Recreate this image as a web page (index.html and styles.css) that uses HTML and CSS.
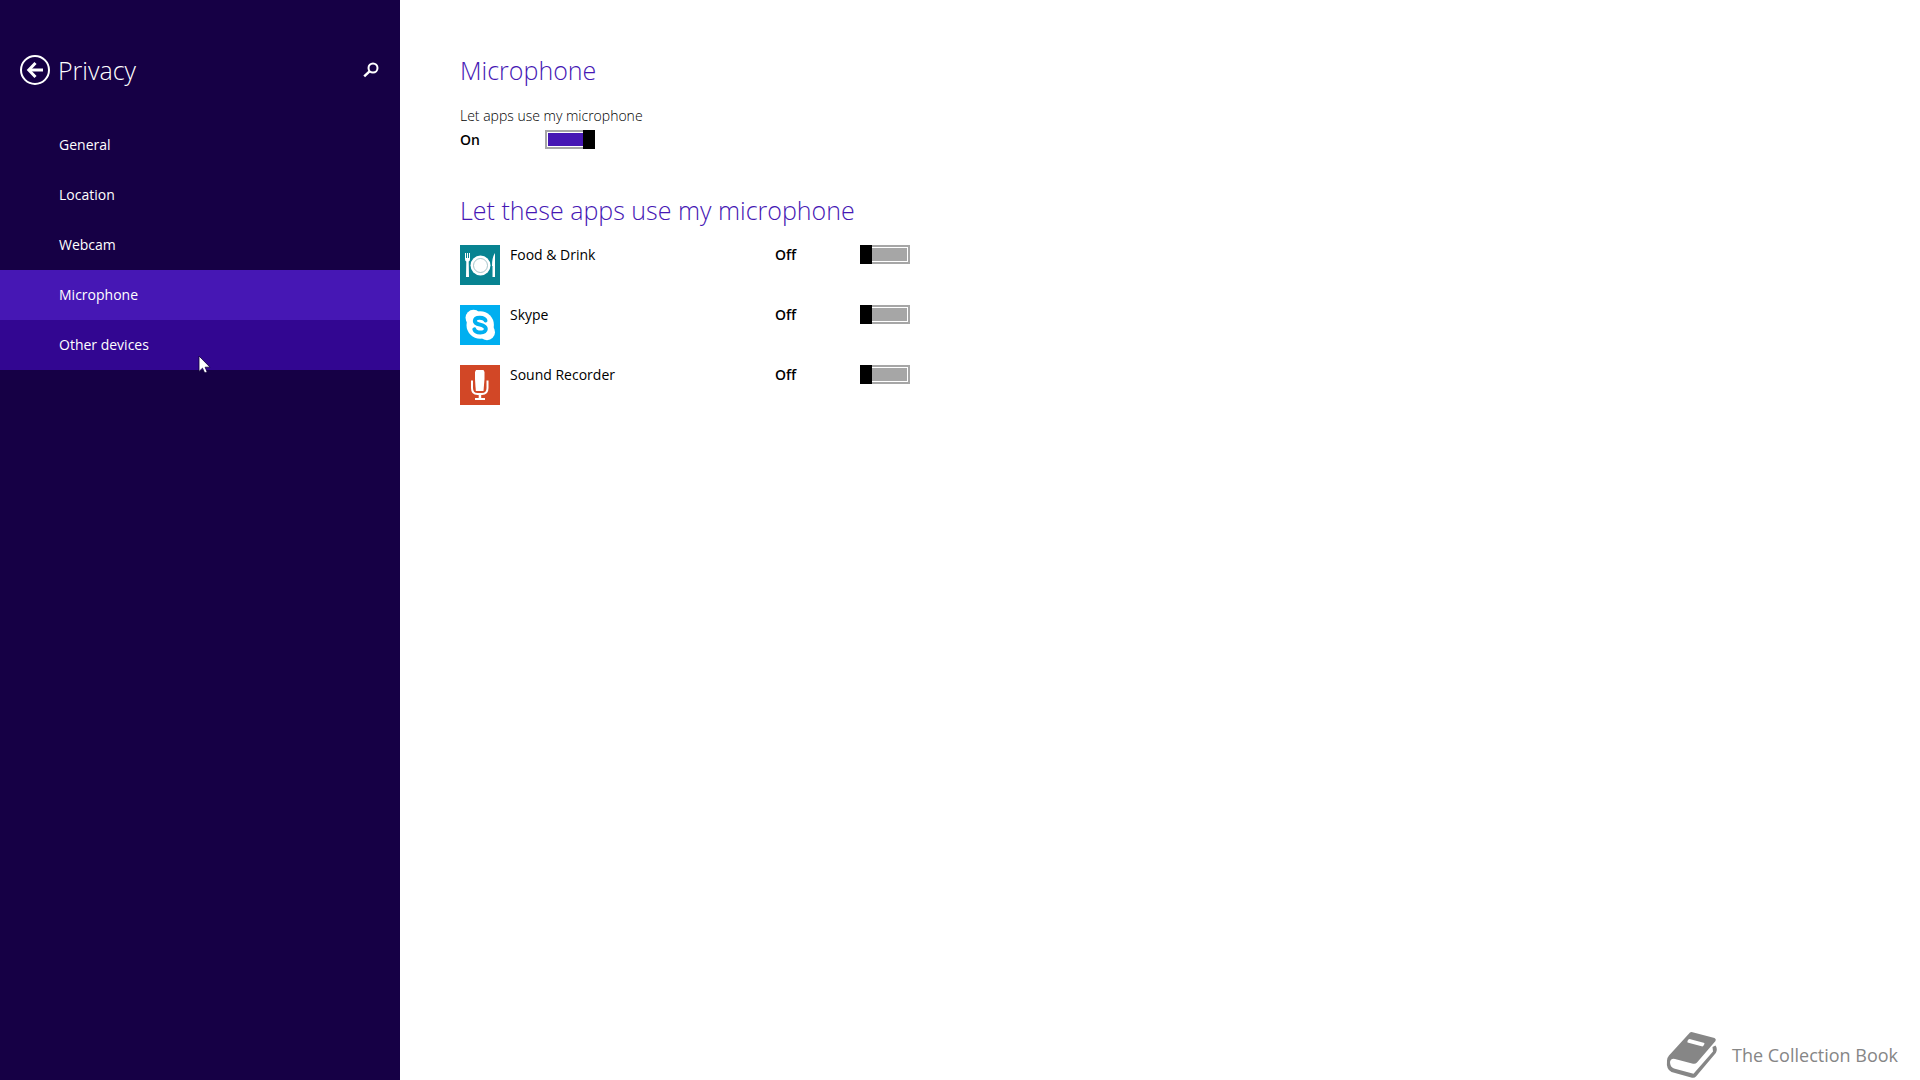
FILE: index.html
```html
<!DOCTYPE html>
<html lang="en">
<head>
<meta charset="utf-8">
<meta name="viewport" content="width=device-width, initial-scale=1">
<title>Privacy - Microphone</title>
<link rel="stylesheet" href="styles.css">
</head>
<body>
<div class="page">
  <aside class="sidebar">
    <header class="sidebar-header">
      <button class="icon-button" type="button" aria-label="Back">
        <svg width="30" height="30" viewBox="0 0 30 30" fill="none" stroke="#fff">
          <circle cx="15" cy="15" r="14" stroke-width="2"/>
          <path d="M23 15H9" stroke-width="3"/>
          <path d="M15.500 8L8.800 15L15.500 22" stroke-width="3"/>
        </svg>
      </button>
      <h1 class="sidebar-title">Privacy</h1>
      <button class="icon-button" type="button" aria-label="Search">
        <svg width="16" height="16" viewBox="0 0 16 16" fill="none" stroke="#fff">
          <circle cx="10" cy="6" r="4.500" stroke-width="2"/>
          <path d="M6.800 9.200L1.200 14.300" stroke-width="2.500"/>
        </svg>
      </button>
    </header>
    <nav class="menu">
      <a class="menu-item" href="#general">General</a>
      <a class="menu-item" href="#location">Location</a>
      <a class="menu-item" href="#webcam">Webcam</a>
      <a class="menu-item menu-item-current" href="#microphone" aria-current="page">Microphone</a>
      <a class="menu-item menu-item-hover" href="#devices">Other devices</a>
    </nav>
    <svg class="cursor" width="13" height="19" viewBox="0 0 13 19">
      <path d="M1 1V16.500L4.500 13.200L6.700 18L9.200 17L7.100 12.200H12Z" fill="#fff" stroke="#10003a" stroke-width=".8"/>
    </svg>
  </aside>

  <main class="content">
    <section class="section">
      <h2 class="heading">Microphone</h2>
      <label class="caption" for="all-apps">Let apps use my microphone</label>
      <div class="master-row">
        <span class="state">On</span>
        <input class="toggle" type="checkbox" role="switch" id="all-apps" checked>
      </div>
    </section>

    <section class="section">
      <h2 class="heading">Let these apps use my microphone</h2>
      <ul class="apps">
        <li class="app">
          <svg class="app-icon" width="40" height="40" viewBox="0 0 40 40">
            <path fill="#078391" d="M0 0h40v40H0z"/>
            <circle cx="20.500" cy="20.500" r="10" fill="#fff"/>
            <circle cx="20.500" cy="20.500" r="7" fill="none" stroke="#8fb5bb" stroke-width=".8"/>
            <path fill="#fff" d="M5 8h1v5h1V8h1v5h1V8h1v6q0 2-1.300 2.500L9 32H6l.3-15.500Q5 16 5 14zM35 8v24h-2.500V21H32q0-9 3-13z"/>
          </svg>
          <label class="app-name" for="food">Food &amp; Drink</label>
          <span class="state">Off</span>
          <input class="toggle" type="checkbox" role="switch" id="food">
        </li>
        <li class="app">
          <svg class="app-icon" width="40" height="40" viewBox="0 0 40 40">
            <path fill="#00aff0" d="M0 0h40v40H0z"/>
            <circle cx="20.200" cy="20" r="13.700" fill="#fff"/>
            <circle cx="13.500" cy="12.800" r="8" fill="#fff"/>
            <circle cx="27" cy="27.200" r="8" fill="#fff"/>
            <path fill="none" stroke="#00aff0" stroke-width="4" stroke-linecap="round" d="M25.500 15.500C24.500 12 15 11.200 14.800 16C14.700 20.800 26 18.500 25.800 24C25.500 28.800 15.500 28.500 14.300 24.300"/>
          </svg>
          <label class="app-name" for="skype">Skype</label>
          <span class="state">Off</span>
          <input class="toggle" type="checkbox" role="switch" id="skype">
        </li>
        <li class="app">
          <svg class="app-icon" width="40" height="40" viewBox="0 0 40 40">
            <path fill="#d24726" d="M0 0h40v40H0z"/>
            <path fill="#fff" d="M16 5h7.500l1 2v7L23.500 26h-7.700L15 14V7z"/>
            <path fill="none" stroke="#fff" stroke-width="2" d="M12 15.500V23q0 6 5.500 6H22q5.500 0 5.500-6v-7.500"/>
            <path fill="#fff" d="M18.700 29h2.500v4H25v2H15v-2h3.700z"/>
          </svg>
          <label class="app-name" for="recorder">Sound Recorder</label>
          <span class="state">Off</span>
          <input class="toggle" type="checkbox" role="switch" id="recorder">
        </li>
      </ul>
    </section>

    <footer class="brand">
      <svg width="52" height="48" viewBox="0 0 52 48">
        <path fill="#868686" fill-rule="evenodd" d="M24 1.500Q25 .8 26.500 1.200L48.500 7Q50.500 8 49.500 10L31 31.500Q29.500 33.200 27 32.700L9 28Q5 27 4 31Q4 36 8 37.500L27.500 42.800L47 20.500L46.500 16L49.500 14.500Q52 18 49.800 22L30 45.500Q28.500 47.300 26 46.700L5.500 41Q0 38.500 1 29.500Q1.200 26.500 3 24.500ZM23.500 8Q21 9 21.500 11.500L36.500 15.500Q38.500 14.500 38.500 12Z"/>
      </svg>
      <span>The Collection Book</span>
    </footer>
  </main>
</div>
</body>
</html>
```
FILE: styles.css
```css
* {
  box-sizing: border-box;
}

body {
  margin: 0;
  background: #fff;
  color: #000;
  font: 14px/20px "Open Sans", "Noto Sans", sans-serif;
}

.page {
  display: grid;
  grid-template-columns: 400px 1fr;
  min-height: 100vh;
}

.sidebar {
  position: relative;
  background: #160045;
  color: #fff;
}

.sidebar-header {
  display: flex;
  align-items: center;
  gap: 8px;
  padding: 50px 21px 30px 20px;
}

.icon-button {
  display: flex;
  padding: 0;
  border: 0;
  background: none;
}

.sidebar-title,
.heading {
  margin: 0;
  font-size: 25px;
  line-height: 40px;
  font-weight: 300;
}

.sidebar-title {
  flex: 1;
}

.menu-item {
  display: block;
  padding: 15px 59px;
  color: inherit;
  text-decoration: none;
}

.menu-item-current {
  background: #4617b4;
}

.menu-item-hover {
  background: #320691;
}

.cursor {
  position: absolute;
  left: 198px;
  top: 355px;
}

.content {
  display: flex;
  flex-direction: column;
  padding: 50px 22px 0 60px;
}

.section {
  max-width: 450px;
  margin-bottom: 40px;
}

.heading {
  color: #4617b4;
  white-space: nowrap;
}

.caption {
  display: block;
  margin-top: 16px;
  font-weight: 300;
}

.master-row {
  display: grid;
  grid-template-columns: 75px 50px;
  gap: 10px;
  padding-top: 4px;
}

.state {
  font-weight: 600;
}

.toggle {
  appearance: none;
  width: 50px;
  height: 19px;
  margin: 0;
  background:
    linear-gradient(#000, #000) left / 12px 100% no-repeat,
    linear-gradient(#a6a6a6, #a6a6a6) center / 44px 13px no-repeat,
    linear-gradient(#fff, #fff) center / 46px 15px no-repeat,
    #a6a6a6;
}

.toggle:checked {
  background:
    linear-gradient(#000, #000) right / 12px 100% no-repeat,
    linear-gradient(#4617b4, #4617b4) center / 44px 13px no-repeat,
    linear-gradient(#fff, #fff) center / 46px 15px no-repeat,
    #a6a6a6;
}

.apps {
  display: grid;
  gap: 20px;
  margin: 0;
  padding: 15px 0 0;
  list-style: none;
}

.app {
  display: grid;
  grid-template-columns: 40px 1fr 75px 50px;
  gap: 10px;
}

.brand {
  display: flex;
  align-items: center;
  justify-content: flex-end;
  gap: 14px;
  margin-top: auto;
  color: #868686;
  font-size: 18px;
  line-height: 50px;
}
```
